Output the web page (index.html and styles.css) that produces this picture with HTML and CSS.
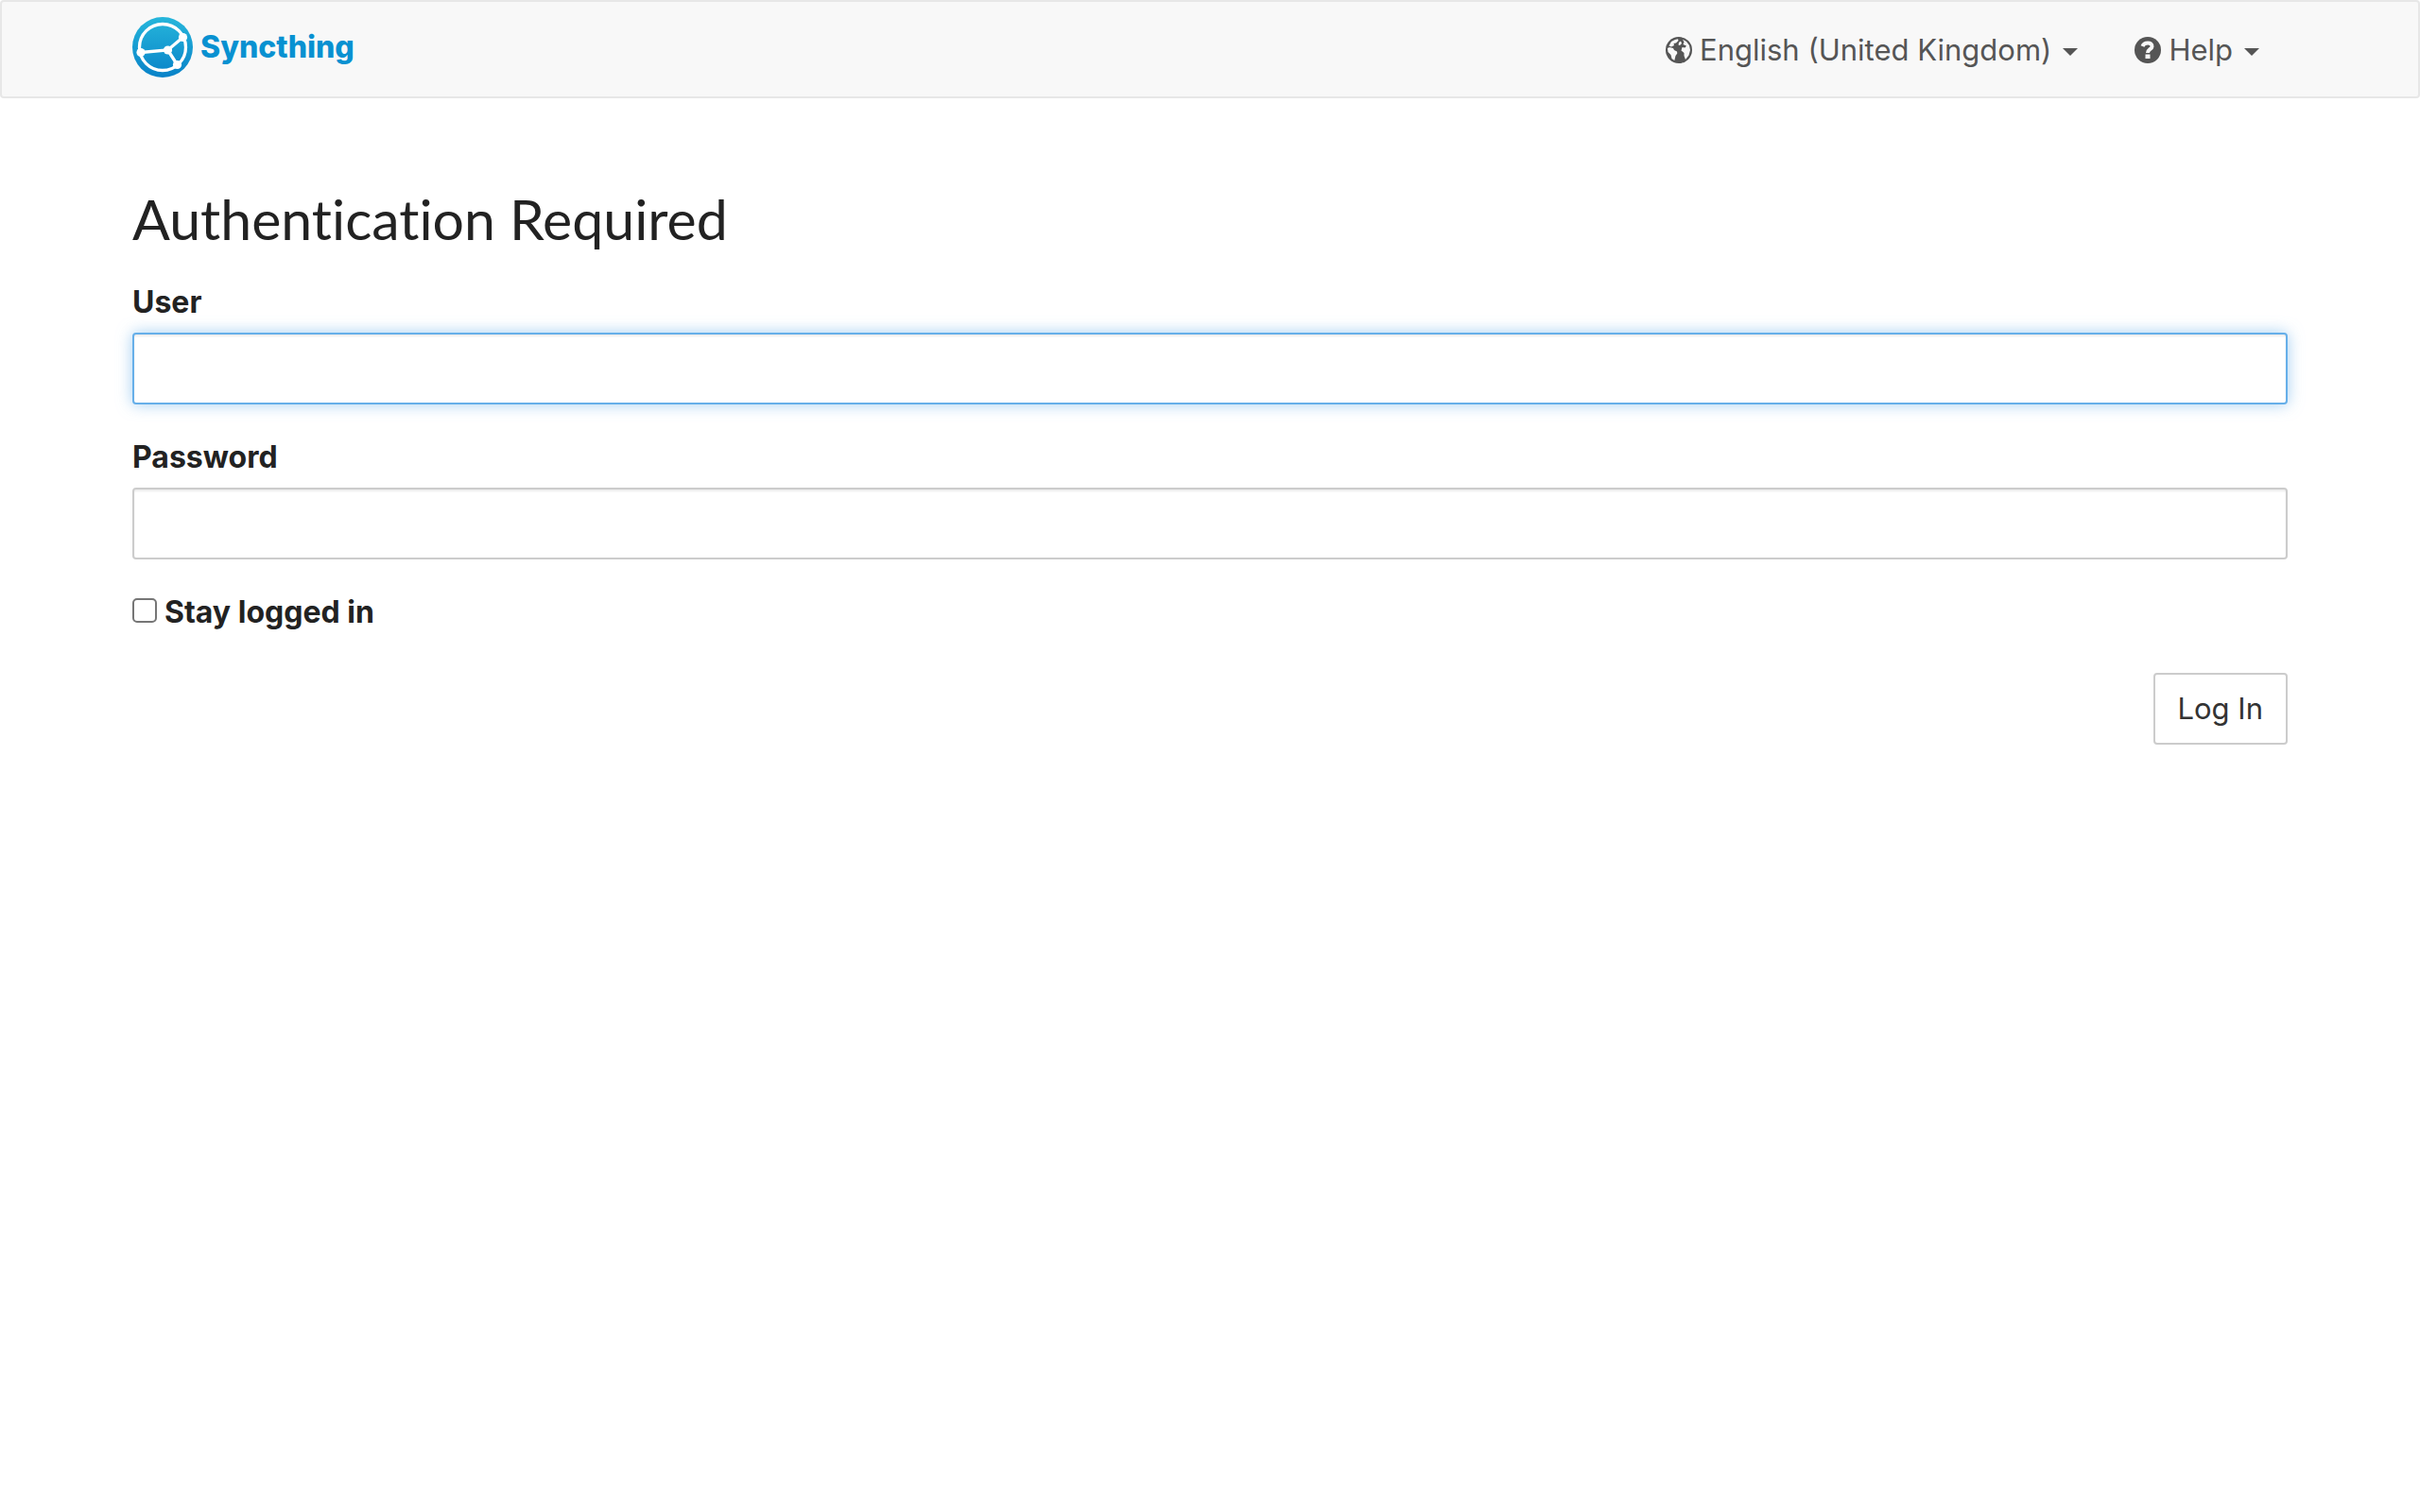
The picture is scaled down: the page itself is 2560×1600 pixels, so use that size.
FILE: index.html
```html
<!DOCTYPE html>
<html lang="en-GB">
<head>
  <meta charset="UTF-8">
  <meta name="viewport" content="width=device-width, initial-scale=1">
  <title>Syncthing</title>
  <link rel="stylesheet" href="styles.css">
</head>
<body>
  <!-- Top bar -->
  <nav class="navbar">
    <div class="container navbar-inner">
      <a class="navbar-brand" href="#">
        <svg class="logo" viewBox="0 0 64 64" aria-hidden="true">
          <defs>
            <linearGradient id="logoFill" x1="0" y1="0" x2="0" y2="1">
              <stop offset="0" stop-color="#26b6db"/>
              <stop offset="1" stop-color="#0882c8"/>
            </linearGradient>
          </defs>
          <circle cx="32" cy="32" r="32" fill="url(#logoFill)"/>
          <g fill="none" stroke="#fff" stroke-width="3.3">
            <circle cx="32" cy="32" r="24.5"/>
            <path d="M9 37.5L37.5 35L53.5 21.5M37.5 35L47.5 50.5"/>
          </g>
          <g fill="#fff">
            <circle cx="9" cy="37.5" r="4.6"/>
            <circle cx="37.5" cy="35" r="4.6"/>
            <circle cx="53.5" cy="21.5" r="4.6"/>
            <circle cx="47.5" cy="50.5" r="4.6"/>
          </g>
        </svg>
        <span class="brand-name">Syncthing</span>
      </a>

      <ul class="navbar-menu">
        <li>
          <button class="menu-toggle" type="button" aria-haspopup="true">
            <svg class="icon" viewBox="0 0 28 28" aria-hidden="true">
              <circle cx="14" cy="14" r="14" fill="#555"/>
              <g fill="#f8f8f8">
                <path d="M6 5L10 3L13 2.3L13.5 4L11 6.5L8.5 7L9 9L6 10.5L3.5 9.5z"/>
                <path d="M14 6L16 4.5L17 7L15 9L13.5 8.5z"/>
                <path d="M2 12L4 11L8 12L9 14L12 15.5L12.3 17.5L10.5 20L9.3 25L6.5 23L5.5 19L2.5 16z"/>
                <path d="M18 2.8L22 5L25 9L26 14L24.5 19.5L21 24L19.5 20L19.5 17L16.5 14.5L17.5 11L20.5 11.5L22 9.5L18.5 8L19.5 5.5z"/>
              </g>
            </svg>
            <span class="menu-text">English (United Kingdom)</span>
            <span class="caret"></span>
          </button>
        </li>
        <li>
          <button class="menu-toggle" type="button" aria-haspopup="true">
            <svg class="icon" viewBox="0 0 28 28" aria-hidden="true">
              <circle cx="14" cy="14" r="14" fill="#555"/>
              <path fill="none" stroke="#f8f8f8" stroke-width="4" d="M8.5 10C10 5.5 18.8 5 18.5 10.3C18.3 13 14 13 14 17"/>
              <path fill="#f8f8f8" d="M11.5 18.5h5v4.5h-5z"/>
            </svg>
            <span class="menu-text">Help</span>
            <span class="caret"></span>
          </button>
        </li>
      </ul>
    </div>
  </nav>

  <!-- Login form -->
  <main class="container">
    <h2>Authentication Required</h2>
    <form>
      <div class="form-group">
        <label for="user">User</label>
        <input id="user" class="form-control focused" type="text" name="user" autocomplete="username">
      </div>
      <div class="form-group">
        <label for="password">Password</label>
        <input id="password" class="form-control" type="password" name="password" autocomplete="current-password">
      </div>
      <div class="form-group">
        <label class="check-label" for="stayLoggedIn">
          <input id="stayLoggedIn" type="checkbox" name="stayLoggedIn">
          <span>Stay logged in</span>
        </label>
      </div>
      <div class="actions">
        <button class="btn" type="submit">Log In</button>
      </div>
    </form>
  </main>
</body>
</html>
```
FILE: styles.css
```css
* {
  box-sizing: border-box;
}

body {
  margin: 0;
  font-family: Inter, "Liberation Sans", sans-serif;
  font-size: 32px;
  line-height: 44px;
  color: #222;
  background: #fff;
}

.container {
  padding: 0 140px;
}

/* Navbar */
.navbar {
  background: #f8f8f8;
  border: 2px solid #e7e7e7;
  border-radius: 4px;
  margin-bottom: 92px;
}

.navbar-inner {
  display: flex;
  justify-content: space-between;
  align-items: flex-start;
  padding: 16px 138px 20px;
}

.navbar-brand {
  display: flex;
  align-items: center;
  gap: 8px;
  color: #0891d1;
  text-decoration: none;
}

.logo {
  width: 64px;
  height: 64px;
}

.brand-name {
  font-weight: 800;
}

.navbar-menu {
  display: flex;
  gap: 60px;
  margin: 0;
  padding: 13px 30px 0 0;
  list-style: none;
}

.menu-toggle {
  display: flex;
  align-items: center;
  gap: 8px;
  padding: 0;
  border: none;
  background: none;
  font: inherit;
  font-size: 31px;
  color: #555;
  cursor: pointer;
}

.icon {
  width: 28px;
  height: 28px;
}

.caret {
  margin: 4px 0 0 4px;
  border-top: 8px solid #555;
  border-right: 8px solid transparent;
  border-left: 8px solid transparent;
}

/* Form */
h2 {
  margin: 0 0 30px;
  font-family: Lato, sans-serif;
  font-weight: 400;
  font-size: 59px;
  line-height: 72px;
  font-variant-ligatures: none;
}

.form-group {
  margin-bottom: 34px;
}

label {
  display: block;
  margin-bottom: 10px;
  font-weight: 700;
}

.form-control {
  display: block;
  width: 100%;
  height: 76px;
  padding: 12px 24px;
  border: 2px solid #ccc;
  border-radius: 4px;
  font: inherit;
  color: #555;
  background: #fff;
  outline: none;
  box-shadow: inset 0 2px 2px rgba(0, 0, 0, 0.075);
}

.form-control.focused,
.form-control:focus {
  border-color: #66afe9;
  box-shadow: inset 0 2px 2px rgba(0, 0, 0, 0.075), 0 0 16px rgba(102, 175, 233, 0.6);
}

.check-label {
  display: flex;
  align-items: center;
  gap: 8px;
}

.check-label input {
  appearance: none;
  width: 26px;
  height: 26px;
  margin: 0 0 4px;
  border: 2px solid #767676;
  border-radius: 5px;
  background: #fff;
}

.check-label input:checked {
  background: #0891d1;
}

.actions {
  display: flex;
  justify-content: flex-end;
  padding-top: 8px;
}

.btn {
  height: 76px;
  padding: 0 24px;
  border: 2px solid #ccc;
  border-radius: 4px;
  font: inherit;
  font-size: 31px;
  color: #333;
  background: #fff;
  cursor: pointer;
}
```
